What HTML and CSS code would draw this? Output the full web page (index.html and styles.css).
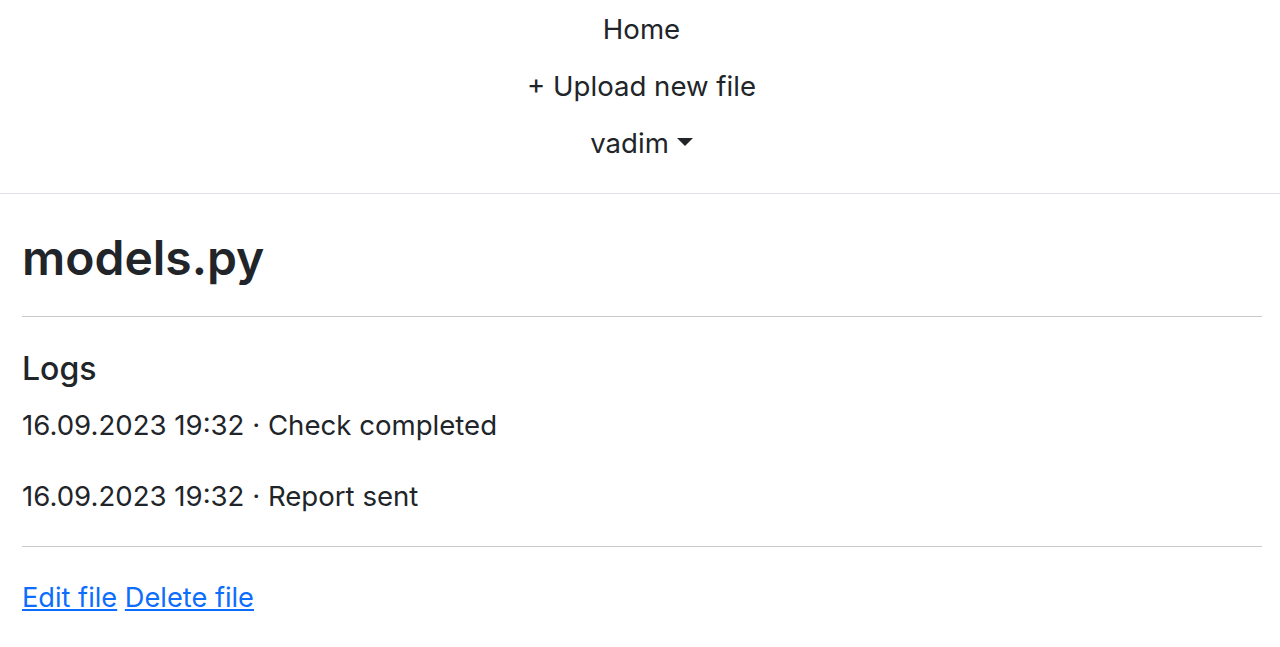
FILE: index.html
```html
<!DOCTYPE html>
<html lang="en">
<head>
<meta charset="utf-8">
<title>models.py</title>
<link rel="stylesheet" href="styles.css">
</head>
<body>
<header class="navbar">
  <nav class="nav">
    <a class="nav-link" href="#">Home</a>
    <a class="nav-link" href="#">+ Upload new file</a>
    <a class="nav-link dropdown-toggle" href="#">vadim</a>
  </nav>
</header>
<main class="container">
  <h1 class="title">models.py</h1>
  <hr class="rule rule-top">
  <h2 class="section-title">Logs</h2>
  <p class="log log-first">16.09.2023 19:32 · Check completed</p>
  <p class="log log-second">16.09.2023 19:32 · Report sent</p>
  <hr class="rule rule-bottom">
  <div class="actions">
    <a class="link" href="#">Edit file</a> <a class="link" href="#">Delete file</a>
  </div>
</main>
</body>
</html>
```

FILE: styles.css
```css
* { box-sizing: border-box; }
html, body { margin: 0; padding: 0; }
body {
  font-family: Inter, "Liberation Sans", Arial, sans-serif;
  color: #212529;
  background: #fff;
  font-size: 27.6px;
}
.navbar {
  border-bottom: 1px solid #dee2e6;
  padding-top: 1px;
  padding-bottom: 21px;
}
.nav {
  display: flex;
  flex-direction: column;
  align-items: center;
  padding-left: 3px;
}
.nav-link {
  display: block;
  height: 57px;
  line-height: 57px;
  color: #212529;
  text-decoration: none;
}
.dropdown-toggle::after {
  content: "";
  display: inline-block;
  margin-left: 8px;
  vertical-align: 7px;
  border-top: 8px solid #212529;
  border-left: 8px solid transparent;
  border-right: 8px solid transparent;
}
.container {
  padding: 0 18px 0 22px;
}
.title {
  margin: 34px 0 0;
  font-size: 48px;
  line-height: 60px;
  font-weight: 600;
}
.rule {
  border: 0;
  border-top: 1px solid #c8c9ca;
  margin: 0;
}
.rule-top { margin-top: 28px; }
.section-title {
  margin: 32px 0 0;
  font-size: 32px;
  line-height: 40px;
  font-weight: 500;
}
.log {
  margin: 0;
  line-height: 40px;
}
.log-first { margin-top: 16px; }
.log-second { margin-top: 31px; }
.rule-bottom { margin-top: 30px; }
.actions {
  margin-top: 31px;
  line-height: 40px;
  font-size: 27.2px;
}
.link {
  color: #0d6efd;
  text-decoration: underline;
}
```
